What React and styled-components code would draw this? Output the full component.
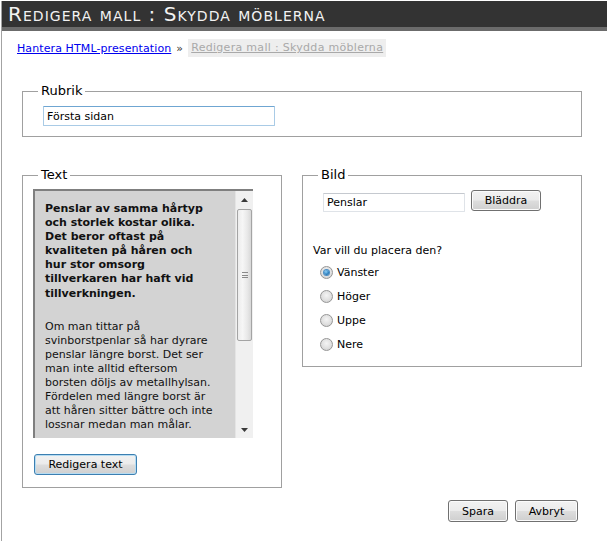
import React from 'react';
import styled, { createGlobalStyle } from 'styled-components';

const Global = createGlobalStyle`
  html, body { margin: 0; padding: 0; background: #fff; }
  body { font-family: Verdana, "DejaVu Sans", sans-serif; font-size: 11px; color: #000; }
  * { box-sizing: border-box; }
`;

const Page = styled.div`
  margin: 1px 0 0 1px;
  border-left: 1px solid #a3a3a3;
  min-height: 540px;
`;

const Header = styled.header`
  height: 30px;
  background: #333333;
  border-bottom: 4px solid #6b6b6b;
  padding-left: 6px;
  display: flex;
  align-items: center;
`;

const Title = styled.h1`
  margin: 0;
  font-weight: normal;
  font-size: 20px;
  font-variant: small-caps;
  color: #f2f2f2;
  letter-spacing: 1.04px;
  line-height: 26px;
`;

const Crumbs = styled.nav`
  margin: 8px 0 0 15px;
  height: 18px;
  display: flex;
  align-items: center;
  gap: 5px;
  font-size: 11px;
  letter-spacing: 0.1px;
`;

const CrumbLink = styled.a`
  color: #0000ee;
  text-decoration: underline;
`;

const CrumbSep = styled.span`
  color: #333;
`;

const CrumbCurrent = styled.span`
  background: #eeeeee;
  color: #a9a9a9;
  text-decoration: underline;
  padding: 2px 3px;
  line-height: 14px;
  letter-spacing: 0.3px;
`;

const Fieldset = styled.fieldset`
  margin: 0;
  border: 1px solid #a0a0a0;
  padding: ${p => p.$pad};
  width: ${p => p.$w || 'auto'};
  min-width: 0;
`;

const Legend = styled.legend`
  font-size: 13px;
  line-height: 16px;
  padding: 0 3px;
  margin-left: ${p => p.$ml || '-5px'};
  color: #000;
`;

const RubrikWrap = styled.div`
  margin: 26px 25px 0 20px;
`;

const TextInput = styled.input`
  font-family: Verdana, "DejaVu Sans", sans-serif;
  font-size: 11px;
  width: ${p => p.$w};
  height: ${p => p.$h};
  padding: 0 3px;
  margin: ${p => p.$m || '0'};
  border: 1px solid ${p => (p.$focus ? '#a9cbe6' : '#dfe3e8')};
  border-top-color: ${p => (p.$focus ? '#6fa6d2' : '#c5c9cf')};
  border-radius: 1px;
  color: #000;
  outline: none;
  background: #fff;
`;

const Row = styled.div`
  display: flex;
  align-items: flex-start;
  gap: 20px;
  margin: 30px 25px 0 20px;
`;

const TextBox = styled.div`
  width: 220px;
  height: 249px;
  border-top: 2px solid #7f7f7f;
  border-left: 2px solid #7f7f7f;
  display: flex;
  overflow: hidden;
`;

const TextContent = styled.div`
  flex: 1;
  background: #d3d3d3;
  padding: 11px 4px 0 10px;
  line-height: 14.1px;
  font-size: 11px;
  color: #111;
  white-space: nowrap;
  overflow: hidden;
`;

const Para = styled.p`
  margin: 0 0 ${p => p.$mb || '0'};
  font-weight: ${p => (p.$bold ? 'bold' : 'normal')};
`;

const Scrollbar = styled.div`
  width: 18px;
  background: #f0f0f0;
  border-left: 1px solid #e4e4e4;
  display: flex;
  flex-direction: column;
`;

const ScrollArrow = styled.div`
  height: 17px;
  display: flex;
  align-items: center;
  justify-content: center;
  color: #333;
`;

const Track = styled.div`
  flex: 1;
  padding: 1px 1px 0 1px;
`;

const Thumb = styled.div`
  height: 132px;
  border: 1px solid #a4a4a4;
  border-radius: 2px;
  background: linear-gradient(to right, #ececec, #f6f6f6 35%, #e9e9e9 70%, #d8d8d8);
  display: flex;
  align-items: center;
  justify-content: center;
`;

const Grip = styled.div`
  width: 6px;
  height: 6px;
  border-top: 1px solid #8a8a8a;
  border-bottom: 1px solid #8a8a8a;
  position: relative;
  &::after {
    content: '';
    position: absolute;
    left: 0;
    right: 0;
    top: 1.5px;
    border-top: 1px solid #8a8a8a;
  }
`;

const Button = styled.button`
  font-family: Verdana, "DejaVu Sans", sans-serif;
  font-size: 11px;
  color: #000;
  width: ${p => p.$w};
  height: ${p => p.$h || '21px'};
  margin: ${p => p.$m || '0'};
  padding: 0;
  border: 1px solid ${p => (p.$active ? '#3c7fb1' : '#707070')};
  border-radius: 3px;
  background: linear-gradient(#f2f2f2 0%, #ebebeb 48%, #dddddd 52%, #cfcfcf 100%);
  box-shadow: inset 0 0 0 1px ${p => (p.$active ? '#b6dcf2' : '#fbfbfb')};
`;

const BrowseRow = styled.div`
  display: flex;
  align-items: flex-start;
  gap: 6px;
  margin-left: 10px;
`;

const Question = styled.div`
  margin-top: 32px;
  line-height: 14px;
  font-size: 11px;
`;

const RadioList = styled.div`
  margin-top: 2px;
  display: flex;
  flex-direction: column;
`;

const RadioRow = styled.label`
  height: 24px;
  display: flex;
  align-items: center;
  gap: 4px;
  padding-left: 7px;
  font-size: 11px;
`;

const RadioDot = styled.span`
  width: 13px;
  height: 13px;
  border-radius: 50%;
  border: 1px solid #969696;
  background: radial-gradient(circle at 50% 40%, #f4f4f4 0%, #e0e0e0 55%, #c9c9c9 100%);
  display: flex;
  align-items: center;
  justify-content: center;
  &::after {
    content: '';
    width: 5px;
    height: 5px;
    border-radius: 50%;
    display: ${p => (p.$checked ? 'block' : 'none')};
    background: radial-gradient(circle at 40% 35%, #8fd0f7 0%, #2a7fc0 60%, #14507f 100%);
    box-shadow: 0 0 0 1px #4b8ec5;
  }
`;

const Footer = styled.div`
  display: flex;
  justify-content: flex-end;
  gap: 7px;
  margin: 12px 29px 0 0;
`;

const Triangle = ({ dir }) => (
  <svg width="7" height="4" viewBox="0 0 7 4">
    {dir === 'up' ? <polygon points="3.5,0 7,4 0,4" fill="#3a3a3a" /> : <polygon points="0,0 7,0 3.5,4" fill="#3a3a3a" />}
  </svg>
);

export default function App() {
  const options = ['Vänster', 'Höger', 'Uppe', 'Nere'];
  return (
    <>
      <Global />
      <Page>
        <Header>
          <Title>Redigera mall : Skydda möblerna</Title>
        </Header>
        <Crumbs>
          <CrumbLink href="#">Hantera HTML-presentation</CrumbLink>
          <CrumbSep>»</CrumbSep>
          <CrumbCurrent>Redigera mall : Skydda möblerna</CrumbCurrent>
        </Crumbs>

        <RubrikWrap>
          <Fieldset $pad="7px 20px 10px 20px">
            <Legend>Rubrik</Legend>
            <TextInput $w="232px" $h="20px" $focus defaultValue="Första sidan" />
          </Fieldset>
        </RubrikWrap>

        <Row>
          <Fieldset $w="260px" $pad="6px 10px 12px 10px">
            <Legend $ml="5px">Text</Legend>
            <TextBox>
              <TextContent>
                <Para $bold $mb="19px">
                  Penslar av samma hårtyp<br />
                  och storlek kostar olika.<br />
                  Det beror oftast på<br />
                  kvaliteten på håren och<br />
                  hur stor omsorg<br />
                  tillverkaren har haft vid<br />
                  tillverkningen.
                </Para>
                <Para>
                  Om man tittar på<br />
                  svinborstpenlar så har dyrare<br />
                  penslar längre borst. Det ser<br />
                  man inte alltid eftersom<br />
                  borsten döljs av metallhylsan.<br />
                  Fördelen med längre borst är<br />
                  att håren sitter bättre och inte<br />
                  lossnar medan man målar.
                </Para>
              </TextContent>
              <Scrollbar>
                <ScrollArrow><Triangle dir="up" /></ScrollArrow>
                <Track>
                  <Thumb><Grip /></Thumb>
                </Track>
                <ScrollArrow><Triangle dir="down" /></ScrollArrow>
              </Scrollbar>
            </TextBox>
            <Button $w="103px" $m="16px 0 0 1px" $active>Redigera text</Button>
          </Fieldset>

          <Fieldset $w="280px" $pad="7px 10px 10px 10px">
            <Legend $ml="5px">Bild</Legend>
            <BrowseRow>
              <TextInput $w="142px" $h="19px" $m="3px 0 0 0" defaultValue="Penslar" />
              <Button $w="70px">Bläddra</Button>
            </BrowseRow>
            <Question>Var vill du placera den?</Question>
            <RadioList>
              {options.map((o, i) => (
                <RadioRow key={o}>
                  <RadioDot $checked={i === 0} />
                  {o}
                </RadioRow>
              ))}
            </RadioList>
          </Fieldset>
        </Row>

        <Footer>
          <Button $w="60px" $h="22px">Spara</Button>
          <Button $w="63px" $h="22px">Avbryt</Button>
        </Footer>
      </Page>
    </>
  );
}
